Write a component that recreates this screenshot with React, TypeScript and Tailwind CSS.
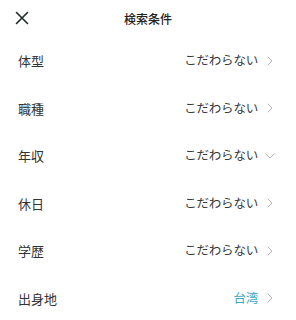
import { ChevronRight, ChevronDown } from "lucide-react";

type Row = { label: string; value: string; open?: boolean; selected?: boolean };

const ROWS: Row[] = [
	{ label: "体型", value: "こだわらない" },
	{ label: "職種", value: "こだわらない" },
	{ label: "年収", value: "こだわらない", open: true },
	{ label: "休日", value: "こだわらない" },
	{ label: "学歴", value: "こだわらない" },
	{ label: "出身地", value: "台湾", selected: true },
];

export default function App() {
	return (
		<div
			className="w-[296px] h-[320px] bg-white overflow-hidden"
			style={{ fontFamily: '"Noto Sans CJK JP", "Noto Sans", sans-serif' }}
		>
			{/* Header */}
			<div className="relative h-[37px] flex items-center justify-center">
				<button className="absolute left-[15px] top-[11px] w-[14px] h-[14px] text-[#1e2a26]">
					<svg viewBox="0 0 14 14" className="w-full h-full" fill="none" stroke="currentColor" strokeWidth="1.6" strokeLinecap="round">
						<path d="M1.5 1.5 L12.5 12.5 M12.5 1.5 L1.5 12.5" />
					</svg>
				</button>
				<h1 className="text-[12px] font-medium text-[#222] leading-none">検索条件</h1>
			</div>

			{/* Conditions */}
			<div className="flex flex-col">
				{ROWS.map((r) => (
					<div key={r.label} className="h-[47.5px] flex items-center pl-[18px] pr-[18px]">
						<span className="flex-1 text-[13px] text-[#333]">{r.label}</span>
						<span
							className={`text-[12.5px] tracking-[-0.2px] ${r.selected ? "text-[#3aa6c4]" : "text-[#3a3a3a]"}`}
						>
							{r.value}
						</span>
						<span className="ml-[4px] flex text-[#b0b0b0]">
							{r.open ? (
								<ChevronDown size={16} strokeWidth={1.4} />
							) : (
								<ChevronRight size={16} strokeWidth={1.4} />
							)}
						</span>
					</div>
				))}
			</div>
		</div>
	);
}
